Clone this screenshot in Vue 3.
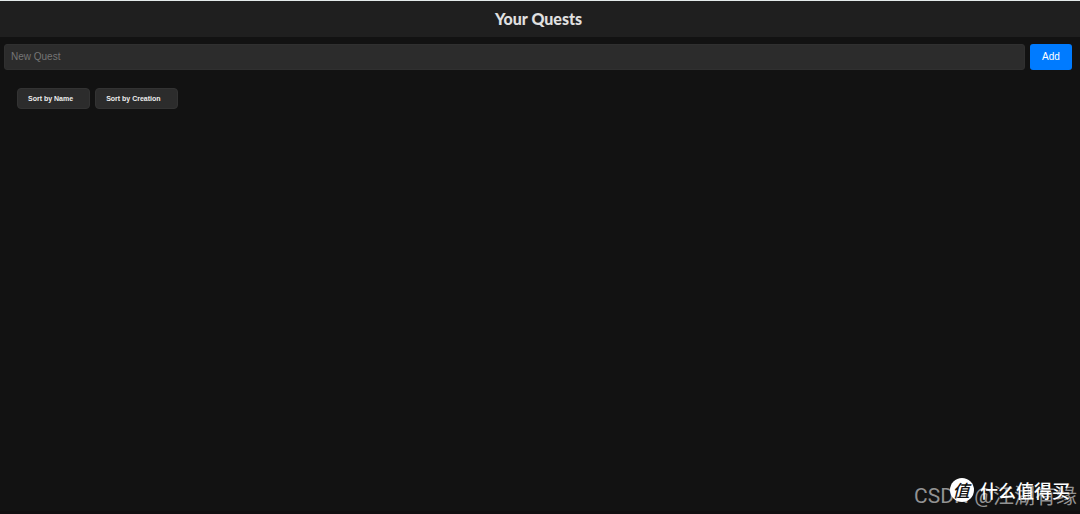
<script setup>
import { ref } from 'vue'

const draft = ref('')
const quests = ref([])
const sorts = [
  { key: 'name', label: 'Sort by Name' },
  { key: 'created', label: 'Sort by Creation' },
]

function addQuest() {
  const name = draft.value.trim()
  if (!name) return
  quests.value.push({ name, created: Date.now() })
  draft.value = ''
}

function sortBy(key) {
  quests.value.sort((a, b) => (a[key] > b[key] ? 1 : -1))
}
</script>

<template>
  <div class="page">
    <header class="header">
      <h1>Your Quests</h1>
    </header>
    <main>
      <form class="add" @submit.prevent="addQuest">
        <input v-model="draft" type="text" placeholder="New Quest" aria-label="New Quest" />
        <button type="submit">Add</button>
      </form>
      <div class="sorts">
        <button v-for="s in sorts" :key="s.key" type="button" @click="sortBy(s.key)">{{ s.label }}</button>
      </div>
      <ul v-if="quests.length" class="list">
        <li v-for="q in quests" :key="q.created">{{ q.name }}</li>
      </ul>
    </main>
    <div class="author">CSDN @江湖有缘</div>
    <div class="brand">
      <span class="badge">值</span>
      <span>什么值得买</span>
    </div>
  </div>
</template>

<style>
body {
  margin: 0;
  background: #121212;
}
</style>

<style scoped>
.page {
  position: relative;
  box-sizing: border-box;
  min-height: 100vh;
  overflow: hidden;
  border-top: 1px solid #e4eaea;
  border-bottom: 3px solid #110e10;
  background: #121212;
  color: #e0e0e0;
  font-family: "Liberation Sans", "Noto Sans CJK SC", sans-serif;
}
.header {
  padding: 6px 0;
  background: #1f1f1f;
  text-align: center;
}
h1 {
  margin: 0 3px 0 0;
  font: 900 16px/24px Lato, sans-serif;
}
.add {
  display: flex;
  gap: 5px;
  padding: 7px 8px 0 4px;
}
.add input {
  flex: 1;
  min-width: 0;
  box-sizing: border-box;
  height: 26px;
  padding: 0 6px 2px;
  border: 1px solid #303030;
  border-radius: 3px;
  background: #2c2c2c;
  color: #e0e0e0;
  font: 10px "Liberation Sans", sans-serif;
}
.add input::placeholder {
  color: #757575;
}
.add button {
  width: 42px;
  height: 26px;
  padding: 0 0 2px;
  border: 0;
  border-radius: 3px;
  background: #007bff;
  color: #fff;
  font: 10px "Liberation Sans", sans-serif;
}
.sorts {
  display: flex;
  gap: 5px;
  padding: 18px 17px;
}
.sorts button {
  height: 21px;
  padding: 0 16px 0 10px;
  border: 1px solid #333;
  border-radius: 4px;
  background: #2c2c2c;
  color: #eee;
  font: bold 7px "Liberation Sans", sans-serif;
}
.list {
  margin: 0 17px;
  padding: 0;
  list-style: none;
  font-size: 10px;
}
.author,
.brand {
  position: absolute;
  white-space: nowrap;
}
.author {
  right: 3px;
  bottom: 0;
  color: #929292;
  font: 21px/30px Roboto, "Noto Sans CJK SC", sans-serif;
}
.brand {
  right: 10px;
  bottom: 9px;
  display: flex;
  align-items: center;
  gap: 6px;
  color: #fff;
  font: 500 18px/24px "Noto Sans CJK SC", sans-serif;
}
.badge {
  box-sizing: border-box;
  width: 24px;
  height: 24px;
  padding-right: 2px;
  border-radius: 50%;
  background: #fff;
  color: #111;
  font-size: 17px;
  font-style: italic;
  text-align: center;
}
</style>
